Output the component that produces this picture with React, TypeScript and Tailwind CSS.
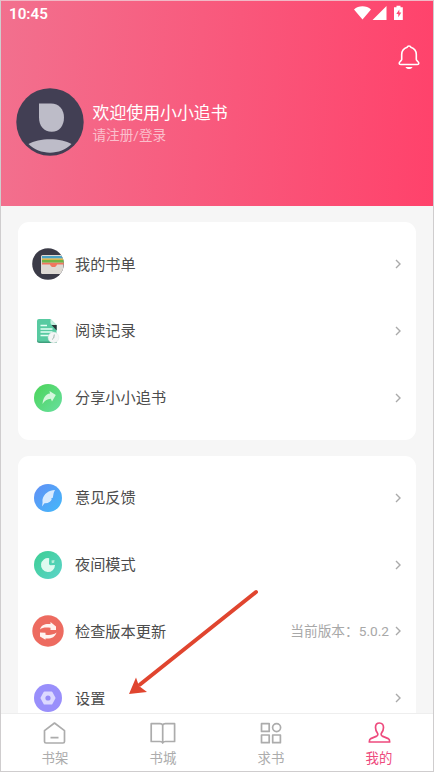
import type { ReactNode } from 'react'

type MenuItem = {
  label: string
  icon: ReactNode
  extra?: string
}

function BookListIcon() {
  return (
    <svg width="32" height="32" viewBox="0 0 32 32">
      <circle cx="16" cy="16" r="15.8" fill="#3b3b47" />
      <clipPath id="wallet">
        <circle cx="16" cy="16" r="15.8" />
      </clipPath>
      <g clipPath="url(#wallet)">
        <rect x="9" y="7" width="22.500" height="19" rx="1.500" fill="#dedad4" />
        <rect x="10" y="8" width="22" height="2.500" fill="#4aa3c4" />
        <rect x="10" y="10.500" width="22" height="1.500" fill="#d9b84a" />
        <rect x="10" y="12" width="22" height="2.700" fill="#6fb544" />
        <path d="M10 14.700h22v1.800h-7c-.6 3.400-6.400 3.400-7 0h-8z" fill="#f0765f" />
      </g>
    </svg>
  )
}

function HistoryIcon() {
  return (
    <svg width="32" height="32" viewBox="0 0 32 32">
      <path d="M7 4h11.500l6 6v17H7a2 2 0 0 1-2-2V6a2 2 0 0 1 2-2z" fill="#58caa1" />
      <path d="M5 24.500a3 3 0 0 0 2 2h17.500V28H7.500A2.500 2.500 0 0 1 5 25.500z" fill="#3f9f7d" />
      <path d="M18.500 4l6 6h-4a2 2 0 0 1-2-2z" fill="#c5efdf" />
      <path d="M19.500 10h5.200v5.500z" fill="#29363a" />
      <path d="M8.500 10.500h6.500M8.500 14h12M8.500 17h12M8.500 20.500h8" stroke="#e4fff5" strokeWidth="1.300" />
      <circle cx="21.500" cy="22.500" r="5.400" fill="#f5f6f6" stroke="#dfe6e4" strokeWidth=".5" />
      <path d="M22.300 19.500l-.6 3.500-1.700 1.500" fill="none" stroke="#9fb5ae" strokeWidth="1" />
    </svg>
  )
}

function ShareIcon() {
  return (
    <svg width="32" height="32" viewBox="0 0 32 32">
      <defs>
        <linearGradient id="share" x1="0" y1="0" x2="1" y2="1">
          <stop stopColor="#4bd458" />
          <stop offset="1" stopColor="#68dfa0" />
        </linearGradient>
      </defs>
      <circle cx="16" cy="16" r="14" fill="url(#share)" />
      <path d="M17.500 9l6.300 4-3.800 6.500-1.200-2.700c-4 .4-6 2-8.300 5.200.5-6 3-10 7.500-10.500z" fill="#d5f7dd" />
    </svg>
  )
}

function FeedbackIcon() {
  return (
    <svg width="32" height="32" viewBox="0 0 32 32">
      <defs>
        <linearGradient id="feedback" x1="0" y1="0" x2="1" y2="1">
          <stop stopColor="#628ff5" />
          <stop offset="1" stopColor="#43b9fa" />
        </linearGradient>
      </defs>
      <circle cx="16" cy="16" r="14" fill="url(#feedback)" />
      <path d="M23 8c-6 0-11.500 4-12.500 9.500-.2 1.500.2 2.500 0 3.500l-.5 3.500 2.500-3.200c4 .2 6.500-1.800 7.300-4.300l-1-.3 2-1C21.500 13 21.300 10.500 23 8z" fill="#d8ebff" />
    </svg>
  )
}

function NightIcon() {
  return (
    <svg width="32" height="32" viewBox="0 0 32 32">
      <defs>
        <linearGradient id="night" x1="0" y1="0" x2="1" y2="1">
          <stop stopColor="#3cce92" />
          <stop offset="1" stopColor="#5dd4cb" />
        </linearGradient>
      </defs>
      <circle cx="16" cy="16" r="14" fill="url(#night)" />
      <path d="M17.200 9.200a7 7 0 1 0 5.800 6.900l-4.500.1a1.700 1.700 0 0 1-1.500-1.700z" fill="#dffaf0" />
      <path d="M19.500 11.500l3-.5-.3 2.800-2.400.5z" fill="#b4eedb" />
    </svg>
  )
}

function UpdateIcon() {
  return (
    <svg width="32" height="32" viewBox="0 0 32 32">
      <circle cx="16" cy="16" r="15.700" fill="#ed6b60" />
      <path d="M8 14.500C9 9.500 13.500 8.500 18.500 9V7l5.500 4.500v3.500h-5.500v-2.200c-4.500-.7-8-.5-10.500 1.700z" fill="#fff3f0" />
      <path d="M24.500 17.500c-1.500 5-5.500 6.500-11 6v1.300L8 21.500v-4l5.500.2v2c4.500.5 8 .2 11-2.200z" fill="#fff3f0" />
    </svg>
  )
}

function SettingsIcon() {
  return (
    <svg width="32" height="32" viewBox="0 0 32 32">
      <circle cx="16" cy="16" r="14" fill="#998ffb" />
      <path
        d="M12.500 10.500h7l3 5.500-3 5.500h-7l-3-5.500z"
        fill="#dcd9ff"
        stroke="#dcd9ff"
        strokeWidth="2"
        strokeLinejoin="round"
      />
      <circle cx="16" cy="16" r="2.600" fill="#968bf8" />
    </svg>
  )
}

const mainItems: MenuItem[] = [
  { label: '我的书单', icon: <BookListIcon /> },
  { label: '阅读记录', icon: <HistoryIcon /> },
  { label: '分享小小追书', icon: <ShareIcon /> },
]

const moreItems: MenuItem[] = [
  { label: '意见反馈', icon: <FeedbackIcon /> },
  { label: '夜间模式', icon: <NightIcon /> },
  { label: '检查版本更新', icon: <UpdateIcon />, extra: '当前版本：5.0.2' },
  { label: '设置', icon: <SettingsIcon /> },
]

const tabs = [
  {
    label: '书架',
    icon: <path d="M2.500 9.700 12.500 2l10 7.700v10.800q0 1.500-1.500 1.500H4q-1.500 0-1.500-1.500zM8.500 16.700h8" />,
  },
  {
    label: '书城',
    icon: <path d="M12.700 4.200C12.200 3 11.200 2.700 10 2.700H1.200v17.800H10c1.300 0 2.200.3 2.700 1.500.5-1.200 1.400-1.500 2.700-1.500h9.200V2.700h-9.200c-1.200 0-2.200.3-2.700 1.500zm0 0V22" />,
  },
  {
    label: '求书',
    icon: (
      <>
        <path d="M3.500 2.700h7.700v7.700H3.500zM3.500 14h7.700v7.700H3.500zM14.700 14h7.700v7.700h-7.700z" />
        <circle cx="18.600" cy="6.600" r="4" />
      </>
    ),
  },
  {
    label: '我的',
    icon: <path d="M13.500 2c-2.700 0-4 2-4 4.600 0 2.600.9 4 1.900 5.300.8 1 .5 2.600-.7 3.200l-5.900 2.500c-1.100.5-1.500 1.300-1.500 3.400h20.400c0-2.100-.4-2.900-1.500-3.400l-5.900-2.500c-1.200-.6-1.500-2.200-.7-3.200 1-1.300 1.900-2.700 1.900-5.300 0-2.600-1.300-4.600-4-4.600z" />,
    active: true,
  },
]

function StatusBar() {
  return (
    <div className="flex h-6 items-center justify-between pt-0.5 pr-[28px] pl-2">
      <span className="font-[Roboto] text-[15.200px] leading-6 font-semibold">10:45</span>
      <svg className="-mt-[3px]" width="51" height="16" viewBox="0 0 51 16" fill="#fff">
        <path d="M0 4.500C4.500.2 12.500.2 17 4.500L8.500 14.500zM32.500 1v14h-14zM42.500.8h4v1.400h2.300V15H40V2.200h2.500z" />
        <path d="M45.300 4.500l-3 4.500h2v3.200l3-4.700h-2z" fill="#ff4a72" />
      </svg>
    </div>
  )
}

function MenuCard({ items }: { items: MenuItem[] }) {
  return (
    <section className="shrink-0 rounded-[11px] bg-white py-[8.5px]">
      {items.map((item) => (
        <div key={item.label} className="flex h-[66.900px] items-center pr-[14px] pl-[13.600px]">
          {item.icon}
          <span className="mt-[2px] ml-[11.400px] flex-1 text-[15.200px] text-[#4c4c4c]">{item.label}</span>
          {item.extra && <span className="mr-[5px] text-[13.700px] text-[#a8a8a8]">{item.extra}</span>}
          <svg width="8" height="12" viewBox="0 0 8 12" fill="none" stroke="#aaa" strokeWidth="1.400">
            <path d="M2 2l4 4-4 4" />
          </svg>
        </div>
      ))}
    </section>
  )
}

export default function App() {
  return (
    <div className="relative flex h-[772px] w-[434px] flex-col overflow-hidden border border-[#cfcdce] border-t-[#f0b9c6] bg-[#f6f6f6] font-[Roboto,'Noto_Sans_CJK_SC',sans-serif]">
      <header className="h-[205px] shrink-0 bg-linear-[93deg] from-[#f2708e] to-[#ff426b] text-white">
        <StatusBar />
        <div className="flex justify-end pt-[19px] pr-[13px]">
          <svg width="22" height="27" viewBox="0 0 22 27" fill="none" stroke="#fff" strokeWidth="1.600" strokeLinejoin="round">
            <path d="M9.200 3.200C9.500 1.500 12.500 1.500 12.800 3.200c3.800 1.200 5.500 3.600 5.500 7.300v5c0 1.300 2.500 2 2.500 3.700 0 .8-.6 1.300-1.500 1.300H2.700c-.9 0-1.500-.5-1.500-1.300 0-1.700 2.500-2.400 2.500-3.700v-5c0-3.700 1.700-6.100 5.500-7.300z" />
            <path d="M7.500 23h7c-1 2.700-6 2.700-7 0z" fill="#fff" stroke="none" />
          </svg>
        </div>
        <div className="mt-[17px] flex items-center pl-[14.500px]">
          <svg width="68" height="68" viewBox="0 0 68 68">
            <circle cx="34" cy="34" r="33.700" fill="#423f54" />
            <path d="M23 15.500h12c8 0 13 6 13 14s-4.500 14.300-12.300 14.300S23 38 23 29.500z" fill="#bdbcc8" />
            <path d="M12.500 56c10-6.500 33-6.500 43 0-11 11.500-32 11.500-43 0z" fill="#bdbcc8" />
          </svg>
          <div className="mt-[2px] ml-[9px]">
            <div className="text-[16.900px] leading-6">欢迎使用小小追书</div>
            <div className="text-[13.600px] leading-5 text-white/60">请注册/登录</div>
          </div>
        </div>
      </header>

      <main className="flex min-h-0 flex-1 flex-col gap-4 overflow-hidden px-[17px] pt-4">
        <MenuCard items={mainItems} />
        <MenuCard items={moreItems} />
      </main>

      <nav className="flex h-[58px] shrink-0 border-t border-[#eee] bg-white">
        {tabs.map((tab) => (
          <div
            key={tab.label}
            className={`flex flex-1 flex-col items-center pt-[7px] text-[13.400px] ${tab.active ? 'text-[#ee4a7d]' : 'text-[#acacac]'}`}
          >
            <svg width="26" height="24" viewBox="0 0 26 24" fill="none" stroke="currentColor" strokeWidth="1.700" strokeLinejoin="round">
              {tab.icon}
            </svg>
            <span className="mt-1 leading-5">{tab.label}</span>
          </div>
        ))}
      </nav>

      {/* pointer to the settings row */}
      <svg className="pointer-events-none absolute top-[584px] left-[124px]" width="140" height="116" viewBox="0 0 140 116">
        <path d="M131 7L15 99.500" stroke="#e0452f" strokeWidth="4" strokeLinecap="round" />
        <path d="M4 109l7-16.500 3 8.500 8 6z" fill="#e0452f" />
      </svg>
    </div>
  )
}
